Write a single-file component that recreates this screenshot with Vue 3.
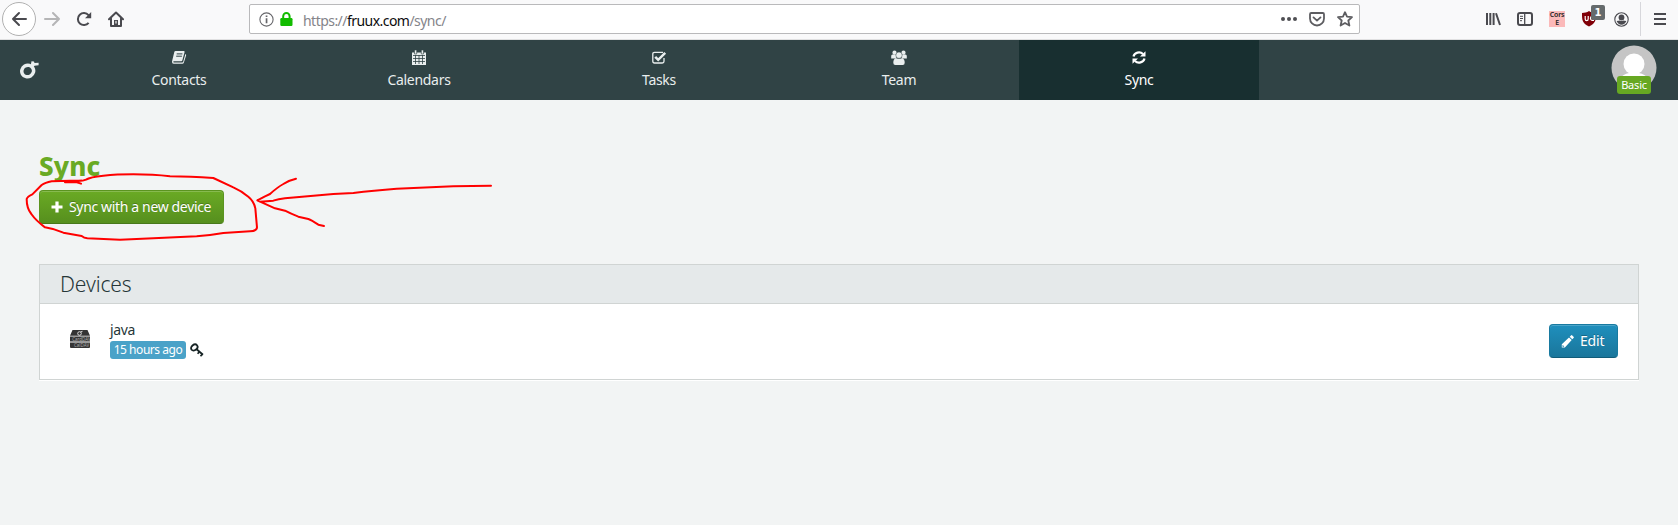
<script setup>
const tabs = [
  { name: 'Contacts', icon: 'book' },
  { name: 'Calendars', icon: 'calendar' },
  { name: 'Tasks', icon: 'check' },
  { name: 'Team', icon: 'team' },
  { name: 'Sync', icon: 'sync', active: true }
]
</script>

<template>
  <div class="page">
    <div class="toolbar">
      <div class="back">
        <svg width="16" height="16" viewBox="0 0 16 16" class="stroke"><path d="M15 8H2M8 2L2 8l6 6" /></svg>
      </div>
      <svg class="stroke forward" width="16" height="16" viewBox="0 0 16 16"><path d="M1 8h14M9 2l6 6-6 6" /></svg>
      <svg class="stroke reload" width="16" height="16" viewBox="0 0 16 16"><path d="M12.6 11.8A6 6 0 1 1 12.5 4.2L14 6" /><path d="M15.2 1v6.2H9z" fill="#4a4a4f" stroke="none" /></svg>
      <svg class="stroke home" width="16" height="16" viewBox="0 0 16 16"><path d="M1 8.3L8 1.5l7 6.8M3 7.5V15h10V7.5" stroke-linecap="round" stroke-linejoin="round" /><path d="M6 9h4v5.5H6z" fill="#4a4a4f" stroke="none" /><path d="M8 10.5v1.5" stroke="#ddd" stroke-width="1.4" /></svg>
      <div class="urlbar">
        <svg class="info" width="15" height="15" viewBox="0 0 15 15"><circle cx="7.5" cy="7.5" r="6.6" fill="none" stroke="#66666a" stroke-width="1.1" /><path d="M6.7 6.3h1.7v5H6.7zM6.7 3.4h1.7v1.7H6.7z" fill="#66666a" /></svg>
        <svg class="lock" width="13" height="14" viewBox="0 0 13 14"><path d="M3.2 7V4.3a3.2 3.3 0 0 1 6.4 0V7" fill="none" stroke="#12bc00" stroke-width="2" /><rect x="0.3" y="6" width="12.2" height="8" rx="1.2" fill="#12bc00" /></svg>
        <span class="url">https://<b>fruux.com</b>/sync/</span>
        <svg class="dots" width="16" height="6" viewBox="0 0 16 6"><g fill="#4f4f53"><circle cx="2" cy="3" r="2" /><circle cx="8" cy="3" r="2" /><circle cx="14" cy="3" r="2" /></g></svg>
        <svg class="pocket" width="16" height="15" viewBox="0 0 16 15"><path d="M2.2 1h11.6q1.2 0 1.2 1.2V6.500a7 7 0 0 1-14 0V2.200Q1 1 2.200 1zM4.500 5.400L8 8.600l3.500-3.200" /></svg>
        <svg class="star" width="16" height="16" viewBox="0 0 16 16"><path d="M8 1.200l2 4.500 5 .5-3.700 3.300 1.100 5L8 12l-4.400 2.500 1.100-5L1 6.200l5-.5z" /></svg>
      </div>
      <svg class="library" width="15" height="14" viewBox="0 0 15 14"><path d="M1 1v12M4.300 1v12M7.600 1v12M10 1.200l4 11.800" /></svg>
      <svg class="sidebar" width="16" height="14" viewBox="0 0 16 14"><rect x="1" y="1" width="14" height="12" rx="2" /><path d="M7.700 1v12" stroke-width="1.300" /><path d="M3 4.300h3M3 6.500h3M3 8.700h2" stroke-width="1" /></svg>
      <div class="cors"><span>Cors</span><span>E</span></div>
      <div class="shield">
        <svg width="14" height="16" viewBox="0 0 14 16"><path d="M7 0c2 1.500 4.500 1.900 7 1.900 0 7 0 10-7 13.600C0 11.900 0 8.900 0 1.900 2.500 1.900 5 1.500 7 0z" fill="#800008" /><path d="M3.200 5v3q0 1.700 1.500 1.700T6.200 8V5M12 5.500H10Q8.400 5.500 8.400 7.300T10 9.400h2" fill="none" stroke="#fff" stroke-width="1.200" /></svg>
        <span class="count">1</span>
      </div>
      <svg class="account" width="15" height="15" viewBox="0 0 15 15"><circle cx="7.500" cy="7.500" r="6.700" fill="none" stroke="#4a4a4f" stroke-width="1.100" /><circle cx="7.500" cy="5.500" r="2.900" fill="#4a4a4f" /><path d="M2.600 9.100Q5 8.700 5.700 8.400q1.800 1.400 3.600 0 .7.300 3.100.7-1.500 3.700-4.900 3.700T2.600 9.100z" fill="#4a4a4f" /></svg>
      <div class="divider"></div>
      <div class="burger"><i></i><i></i><i></i></div>
    </div>

    <header class="header">
      <div class="logo">
        <svg width="19" height="18" viewBox="0 0 19 18"><ellipse cx="7.700" cy="10" rx="6" ry="5.700" fill="none" stroke="#e9eeee" stroke-width="3.500" transform="rotate(-30 7.700 10)" /><path d="M10.500 5.500L11.500 .2 14 .5 14.500 2 18.600 1.800V4.300L14.500 4.800 13 7z" fill="#e9eeee" /></svg>
      </div>
      <nav class="nav">
        <a v-for="tab in tabs" :key="tab.name" class="tab" :class="{ active: tab.active }">
          <svg width="16" height="15" viewBox="0 0 16 15">
            <g v-if="tab.icon === 'book'">
              <path d="M4.500 1h8.300q1 0 .8 1l-2.300 8.500q-.2.800-1 .8H2.600q-.6.600 0 1.200h8.600q.8 0 1-.7L14.400 4q1 .5.700 1.400l-2.300 7.400q-.3 1-1.300 1H2.700Q.8 13.700 1 11.500L3.300 2q.3-1 1.200-1z" fill="#e9eeee" />
              <path d="M5.700 3.900h5.700M5.200 6.200h5.700" stroke="#304345" />
            </g>
            <g v-else-if="tab.icon === 'calendar'">
              <path d="M1 2.500h14V15H1z" fill="#e9eeee" />
              <path d="M3.500 0h2.200v4H3.500zM10.300 0h2.200v4h-2.200z" fill="#e9eeee" stroke="#304345" stroke-width=".6" />
              <path d="M2 5.500h12M2 8.500h12M2 11.500h12M4.500 5v9M8 5v9M11.500 5v9" stroke="#304345" stroke-width=".8" />
            </g>
            <g v-else-if="tab.icon === 'check'">
              <path d="M13 8v3.300q0 1.700-1.700 1.700H3.500q-1.700 0-1.700-1.700V4q0-1.700 1.700-1.700H12" fill="none" stroke="#e9eeee" stroke-width="1.300" />
              <path d="M4.200 6.800l3 3 7-7" fill="none" stroke="#e9eeee" stroke-width="2.500" />
            </g>
            <g v-else-if="tab.icon === 'team'" fill="#e9eeee">
              <circle cx="3.500" cy="2.700" r="2.100" /><circle cx="12.500" cy="2.700" r="2.100" />
              <path d="M.2 8.500V6Q.2 4.500 1.500 4.500h3L6 5.500 4.500 8.500zM15.800 8.500V6q0-1.500-1.300-1.500h-3l-1.500 1 1.500 3z" />
              <circle cx="8" cy="5.200" r="3.200" stroke="#304345" stroke-width=".5" />
              <path d="M4.800 7.900Q8 10.200 11.200 7.900q2.500 1 2.500 4.800 0 2.300-2 2.300H4.300q-2 0-2-2.300 0-3.800 2.500-4.800z" />
            </g>
            <g v-else>
              <path d="M2.500 6.500A5.600 5.200 0 0 1 12 4M13.500 8.500A5.600 5.200 0 0 1 4 11" fill="none" stroke="#fff" stroke-width="2.200" />
              <path d="M14.500 1.200v5.300H9zM1.500 13.800V8.500H7z" fill="#fff" />
            </g>
          </svg>
          <span>{{ tab.name }}</span>
        </a>
      </nav>
      <div class="profile">
        <svg width="46" height="46" viewBox="0 0 46 46"><defs><clipPath id="round"><circle cx="23" cy="23" r="22.500" /></clipPath></defs><g clip-path="url(#round)"><path d="M0 0h46v46H0z" fill="#c5c5c5" /><circle cx="23" cy="19" r="10.500" fill="#fff" /><path d="M6 46q0-16 12-18h10q12 2 12 18z" fill="#fff" /></g></svg>
        <span class="plan">Basic</span>
      </div>
    </header>

    <main class="content">
      <h1>Sync</h1>
      <button class="btn green">
        <svg width="12" height="12" viewBox="0 0 12 12"><path d="M6 .5v11M.5 6h11" stroke="#fff" stroke-width="3.200" /></svg>
        <span>Sync with a new device</span>
      </button>
      <section class="panel">
        <h2><span>Devices</span></h2>
        <div class="row">
          <svg class="device" width="20" height="18" viewBox="0 0 20 18">
            <path d="M2.500 0h15L20 5.700H0zM0 6.600h20v5H0zM0 12.500h20V17q0 1-1 1H1q-1 0-1-1z" fill="#343434" />
            <circle cx="9.500" cy="3.500" r="1.800" fill="none" stroke="#ddd" stroke-width="1" /><path d="M10.500 2l2-.7" stroke="#ddd" />
            <text x="2.200" y="10.600" class="tiny">CardDAV</text><text x="4" y="16.600" class="tiny">CalDAV</text>
          </svg>
          <div class="details">
            <span class="name">java</span>
            <div class="meta">
              <span class="badge">15 hours ago</span>
              <svg width="14" height="14" viewBox="0 0 14 14" fill="none" stroke="#172425"><ellipse cx="4.300" cy="4.500" rx="3.500" ry="2.700" stroke-width="1.900" transform="rotate(-40 4.300 4.500)" /><path d="M6.300 6l6.700 5.800" stroke-width="1.800" /><path d="M9.600 8.600l-2 2.200M12.400 11l-1.900 2.200" stroke-width="1.700" /></svg>
            </div>
          </div>
          <button class="btn blue">
            <svg width="13" height="13" viewBox="0 0 13 13"><path d="M8.700 1.700l2.600 2.600L12.500 3q.7-.6 0-1.300L11.300.5Q10.600-.2 10 .4zM8 2.400L.8 9.200V12.500H3.900L10.700 5zM1.800 9.900l1.500 1.500-.5.400H1.500v-1.400z" fill="#fff" fill-rule="evenodd" /></svg>
            <span>Edit</span>
          </button>
        </div>
      </section>
    </main>

    <svg class="markup" width="1678" height="525" viewBox="0 0 1678 525">
      <g transform="translate(0 140) scale(.33333)">
        <path d="M243 131L228 126 195 127M245 122L210 122 155 124Q135 128 125 135L97 163Q82 170 80 177 80 205 94 222 108 242 135 262 162 266 190 278L245 288Q252 294 262 295L360 299 460 295 590 289Q630 286 670 279L750 274Q771 273 771 262L766 205Q762 184 745 170 725 153 700 142L640 114Q570 109 510 109 460 103 400 103 350 103 310 107 270 111 258 119 250 123 235 123" />
      </g>
      <g transform="translate(240 160) scale(.33333)">
        <path d="M168 56Q148 60 130 72 112 82 90 102L75 109 52 121 60 125 100 122Q115 117 135 115 170 112 280 102L340 99Q400 91 470 86L640 79 753 77M52 121L105 145 135 152Q150 160 175 170L205 177Q214 180 235 194L252 198" />
      </g>
    </svg>
  </div>
</template>

<style>
body { background: #f2f4f4; }
</style>

<style scoped>
* { box-sizing: border-box; }
.page { position: relative; width: 1678px; height: 525px; overflow: hidden; background: #f2f4f4; font-family: "Noto Sans", "Open Sans", sans-serif; color: #263638; }
svg { display: block; flex: none; }
.toolbar { height: 40px; display: flex; align-items: flex-start; background: #f9f9fa; border-bottom: 1px solid #e0e0e1; }
.stroke { fill: none; stroke: #4a4a4f; stroke-width: 2; stroke-linecap: round; stroke-linejoin: round; }
.back { width: 34px; height: 34px; margin: 2px 0 0 2px; border: 1px solid #b1b1b1; border-radius: 50%; background: #fff; display: grid; place-items: center; }
.forward { margin: 11px 0 0 8px; stroke: #b5b5b6; }
.reload { margin: 11px 0 0 16px; stroke-linecap: butt; }
.home { margin: 11px 0 0 16px; }
.urlbar { display: flex; align-items: flex-start; width: 1111px; height: 30px; margin: 4px 0 0 125px; background: #fff; border: 1px solid #b9b9bb; border-radius: 2px; }
.info { margin: 7px 0 0 9px; }
.lock { margin: 7px 0 0 6px; }
.url { margin: 6px 0 0 10px; width: 161px; font-size: 14px; line-height: 20px; letter-spacing: -.54px; color: #84848a; white-space: nowrap; }
.url b { font-weight: 400; color: #0c0c0d; }
.dots { margin: 11px 0 0 817px; }
.pocket { margin: 7px 0 0 12px; }
.star { margin: 6px 0 0 12px; }
.pocket path, .star path { fill: none; stroke: #5d5d61; stroke-width: 1.800; stroke-linejoin: round; stroke-linecap: round; }
.library { margin: 12px 0 0 126px; fill: none; stroke: #4a4a4f; stroke-width: 2; }
.sidebar { margin: 12px 0 0 16px; fill: none; stroke: #4a4a4f; stroke-width: 2; }
.cors { display: flex; flex-direction: column; align-items: center; width: 16px; height: 16px; margin: 11px 0 0 16px; background: #fbb9b9; font-size: 7px; line-height: 8px; font-weight: 600; letter-spacing: -.2px; color: #222; }
.shield { position: relative; margin: 11px 0 0 17px; }
.count { position: absolute; left: 9px; top: -6px; width: 14px; height: 15px; border-radius: 2px; background: #666b6c; color: #fff; font: bold 10px/15px "DejaVu Sans", sans-serif; text-align: center; }
.account { margin: 12px 0 0 18px; }
.divider { width: 1px; height: 34px; margin: 2px 0 0 11px; background: #d7d7db; }
.burger { display: flex; flex-direction: column; gap: 3px; width: 12px; margin: 13px 0 0 13px; }
.burger i { height: 2px; background: #4a4a4f; }

.header { display: flex; height: 60px; background: #304345; color: #e9eeee; }
.logo { width: 59px; padding: 21px 0 0 20px; }
.nav { display: flex; flex: 1; }
.tab { display: flex; flex-direction: column; align-items: center; width: 240px; padding-top: 10px; font-size: 14px; line-height: 20px; letter-spacing: -.3px; }
.tab span { margin-top: 5px; }
.active { background: #182f30; color: #fff; }
.profile { position: relative; margin: 5px 21px 0 0; width: 46px; height: 49px; }
.plan { position: absolute; left: 6px; top: 31px; width: 34px; height: 18px; border-radius: 3px; background: #67a822; color: #fff; font-size: 11px; line-height: 18px; letter-spacing: -.2px; text-align: center; }

.content { padding: 49px 39px 0; }
h1 { margin: 0 0 5px; height: 36px; font-size: 26px; line-height: 34px; font-weight: 800; letter-spacing: .15px; color: #6aaa24; }
.btn { display: flex; align-items: center; height: 34px; padding: 0 12px; font: 14px/20px "Noto Sans", sans-serif; color: #fff; border: 1px solid; border-radius: 4px; white-space: nowrap; text-shadow: 0 -1px 0 rgba(0, 0, 0, .25); box-shadow: inset 0 1px 0 rgba(255, 255, 255, .2); }
.green { width: 185px; border-color: #5b9420 #5b9420 #47781a; background: linear-gradient(#6aaa24, #568f1e); letter-spacing: -.35px; }
.green span { margin-left: 6px; }
.blue { width: 69px; margin: 20px 20px 0 auto; border-color: #187aa0 #187aa0 #115c79; background: linear-gradient(#1f8fbd, #1a769b); }
.blue span { margin-left: 6px; letter-spacing: -.2px; }
.btn svg { margin-left: -1px; }
.panel { height: 116px; margin-top: 40px; border: 1px solid #d0d4d3; background: #fff; box-shadow: 0 1px 0 #fff; }
h2 { margin: 0; height: 39px; padding-left: 20px; border-bottom: 1px solid #d0d4d3; background: #e5e9ea; font-size: 21px; line-height: 39px; font-weight: 300; letter-spacing: -.1px; }
.row { display: flex; align-items: flex-start; }
.device { margin: 26px 0 0 30px; }
.tiny { font-size: 4.500px; fill: #aaa; }
.details { margin: 15px 0 0 20px; }
.name { display: block; height: 22px; font-size: 14px; line-height: 21px; letter-spacing: -.4px; }
.meta { display: flex; align-items: center; gap: 4px; }
.badge { width: 76px; height: 18px; border-radius: 3px; background: #4aa2c8; color: #fff; font-size: 12px; line-height: 18px; letter-spacing: -.45px; text-align: center; white-space: nowrap; }
.meta svg { margin-top: -1px; }
.markup { position: absolute; left: 0; top: 0; pointer-events: none; }
.markup path { fill: none; stroke: #f00; stroke-width: 6; stroke-linecap: round; stroke-linejoin: round; }
</style>
